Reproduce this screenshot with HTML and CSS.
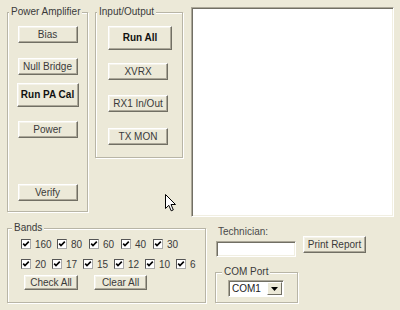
FILE: index.html
```html
<!DOCTYPE html>
<html lang="en">
<head>
  <meta charset="UTF-8" />
  <title>PA Calibration</title>
  <link rel="stylesheet" href="styles.css">
</head>
<body>
  <div class="window">

    <div class="top">
      <!-- Power Amplifier -->
      <fieldset class="group pa">
        <legend>Power Amplifier</legend>
        <div class="stack">
          <button class="btn pa-bias">Bias</button>
          <button class="btn pa-null">Null Bridge</button>
          <button class="btn big pa-run">Run PA Cal</button>
          <button class="btn pa-power">Power</button>
          <button class="btn pa-verify">Verify</button>
        </div>
      </fieldset>

      <!-- Input/Output -->
      <fieldset class="group io">
        <legend>Input/Output</legend>
        <div class="stack left">
          <button class="btn big io-run">Run All</button>
          <button class="btn io-xvrx">XVRX</button>
          <button class="btn io-rx1">RX1 In/Out</button>
          <button class="btn io-tx">TX MON</button>
        </div>
      </fieldset>

      <div class="log"></div>
    </div>

    <div class="bottom">
      <!-- Bands -->
      <fieldset class="group bands">
        <legend>Bands</legend>
        <div class="bands-body">
          <div class="band-row row1">
            <label class="band"><span class="box"><svg viewBox="0 0 8 8"><polyline points="1.2,3.6 3,5.6 6.8,1.6"/></svg></span>160</label>
            <label class="band"><span class="box"><svg viewBox="0 0 8 8"><polyline points="1.2,3.6 3,5.6 6.8,1.6"/></svg></span>80</label>
            <label class="band"><span class="box"><svg viewBox="0 0 8 8"><polyline points="1.2,3.6 3,5.6 6.8,1.6"/></svg></span>60</label>
            <label class="band"><span class="box"><svg viewBox="0 0 8 8"><polyline points="1.2,3.6 3,5.6 6.8,1.6"/></svg></span>40</label>
            <label class="band"><span class="box"><svg viewBox="0 0 8 8"><polyline points="1.2,3.6 3,5.6 6.8,1.6"/></svg></span>30</label>
          </div>
          <div class="band-row row2">
            <label class="band"><span class="box"><svg viewBox="0 0 8 8"><polyline points="1.2,3.6 3,5.6 6.8,1.6"/></svg></span>20</label>
            <label class="band"><span class="box"><svg viewBox="0 0 8 8"><polyline points="1.2,3.6 3,5.6 6.8,1.6"/></svg></span>17</label>
            <label class="band"><span class="box"><svg viewBox="0 0 8 8"><polyline points="1.2,3.6 3,5.6 6.8,1.6"/></svg></span>15</label>
            <label class="band"><span class="box"><svg viewBox="0 0 8 8"><polyline points="1.2,3.6 3,5.6 6.8,1.6"/></svg></span>12</label>
            <label class="band"><span class="box"><svg viewBox="0 0 8 8"><polyline points="1.2,3.6 3,5.6 6.8,1.6"/></svg></span>10</label>
            <label class="band"><span class="box"><svg viewBox="0 0 8 8"><polyline points="1.2,3.6 3,5.6 6.8,1.6"/></svg></span>6</label>
          </div>
          <div class="band-buttons">
            <button class="btn check-all">Check All</button>
            <button class="btn clear-all">Clear All</button>
          </div>
        </div>
      </fieldset>

      <div class="side">
        <div class="tech-row">
          <div class="tech">
            <div class="label">Technician:</div>
            <div class="textbox"></div>
          </div>
          <button class="btn print">Print Report</button>
        </div>

        <!-- COM Port -->
        <fieldset class="group com">
          <legend>COM Port</legend>
          <div class="combo">
            <span class="combo-value">COM1</span>
            <span class="combo-arrow"><svg viewBox="0 0 7 4"><polygon points="0,0 7,0 3.5,4"/></svg></span>
          </div>
        </fieldset>
      </div>
    </div>

    <svg class="cursor" viewBox="0 0 12 18" width="12" height="18">
      <path d="M0.5 0.5 L0.5 14.5 L3.8 11.3 L6.2 16.8 L8.3 15.9 L6 10.5 L10.5 10.5 Z"/>
    </svg>
  </div>
</body>
</html>
```

FILE: styles.css
```css
* {
  box-sizing: border-box;
}
body {
  margin: 0;
  background-color: #ece9d8;
  font-family: "Liberation Sans", Arial, sans-serif;
  font-size: 10px;
  color: #3a3a3a;
}
.window {
  position: relative;
  width: 400px;
  height: 310px;
  padding: 6px 0 0 7px;
}
.top {
  display: flex;
  align-items: flex-start;
}
.bottom {
  display: flex;
  align-items: flex-start;
  margin-top: 5px;
}

/* group boxes */
.group {
  margin: 0;
  padding: 0;
  min-width: 0;
  border: 1px solid #b8b5a6;
  box-shadow: 1px 1px 0 #fff, inset 1px 1px 0 #fff;
}
.group legend {
  padding: 0 2px;
  margin-left: 1px;
  line-height: 12px;
  color: #3a3a3a;
  background: #ece9d8;
}
.pa {
  width: 81px;
  height: 206px;
  padding-top: 8px;
}
.io {
  width: 88px;
  height: 152px;
  margin-left: 7px;
  padding-top: 8px;
}
.stack {
  display: flex;
  flex-direction: column;
  align-items: center;
}
.stack.left {
  align-items: flex-start;
  padding-left: 12px;
}

/* buttons */
.btn {
  font: inherit;
  color: #3a3a3a;
  padding: 0;
  margin: 0;
  width: 60px;
  height: 17px;
  background: #ece9d8;
  border: 1px solid;
  border-color: #fff #716f64 #716f64 #fff;
  box-shadow: inset -1px -1px 0 #aca899, inset 1px 1px 0 #f5f3ea;
  line-height: 14px;
}
.btn.big {
  font-weight: bold;
  color: #111;
  height: 24px;
}
.pa-null { margin-top: 15px; }
.pa-run { margin-top: 8px; width: 62px; }
.pa-power { margin-top: 14px; }
.pa-verify { margin-top: 46px; }
.io-run { width: 64px; }
.io-xvrx { margin-top: 13px; }
.io-rx1 { margin-top: 15px; }
.io-tx { margin-top: 16px; }

.log {
  width: 203px;
  height: 210px;
  margin: 1px 0 0 8px;
  background: #fff;
  border: 1px solid;
  border-color: #aca899 #fff #fff #aca899;
  box-shadow: inset 1px 1px 0 #716f64, inset -1px -1px 0 #f1efe2;
}

/* bands */
.bands {
  width: 199px;
  height: 81px;
}
.bands legend {
  margin-left: 4px;
}
.bands-body {
  padding: 3px 0 0 13px;
}
.band-row {
  display: grid;
  height: 14px;
}
.row1 {
  grid-template-columns: 36px 32px 32px 32px 32px;
}
.row2 {
  margin-top: 6px;
  grid-template-columns: repeat(6, 31px);
}
.band {
  display: flex;
  align-items: center;
  gap: 4px;
  white-space: nowrap;
}
.box {
  display: flex;
  align-items: center;
  justify-content: center;
  width: 10px;
  height: 10px;
  background: #fff;
  border: 1px solid;
  border-color: #555 #aaa #aaa #555;
}
.box svg {
  width: 8px;
  height: 8px;
  fill: none;
  stroke: #000;
  stroke-width: 1.6;
}
.band-buttons {
  display: flex;
  gap: 16px;
  margin-top: 4px;
  padding-left: 3px;
}
.check-all { width: 54px; height: 15px; line-height: 12px; }
.clear-all { width: 53px; height: 15px; line-height: 12px; }

/* right bottom side */
.side {
  margin-left: 9px;
  padding-top: 4px;
}
.tech-row {
  display: flex;
  align-items: flex-start;
}
.label {
  line-height: 12px;
  padding-left: 3px;
  color: #4a4a4a;
}
.textbox {
  width: 80px;
  height: 16px;
  margin: 3px 0 0 1px;
  background: #fff;
  border: 1px solid;
  border-color: #aca899 #fff #fff #aca899;
  box-shadow: inset 1px 1px 0 #716f64, inset -1px -1px 0 #f1efe2;
}
.print {
  width: 63px;
  margin: 10px 0 0 7px;
}
.com {
  width: 83px;
  height: 37px;
  margin-top: 9px;
}
.com legend {
  margin-left: 6px;
}
.combo {
  display: flex;
  width: 56px;
  height: 17px;
  margin: 2px 0 0 12px;
  background: #fff;
  border: 1px solid;
  border-color: #aca899 #fff #fff #aca899;
  box-shadow: inset 1px 1px 0 #716f64;
}
.combo-value {
  flex: 1;
  padding: 1px 0 0 3px;
  line-height: 13px;
  color: #222;
}
.combo-arrow {
  display: flex;
  align-items: center;
  justify-content: center;
  width: 15px;
  margin: 1px 1px 1px 0;
  background: #ece9d8;
  border: 1px solid;
  border-color: #fff #716f64 #716f64 #fff;
}
.combo-arrow svg {
  width: 7px;
  height: 4px;
  fill: #000;
}

.cursor {
  position: absolute;
  left: 165px;
  top: 194px;
  fill: #fff;
  stroke: #000;
  stroke-width: 1;
}
```
